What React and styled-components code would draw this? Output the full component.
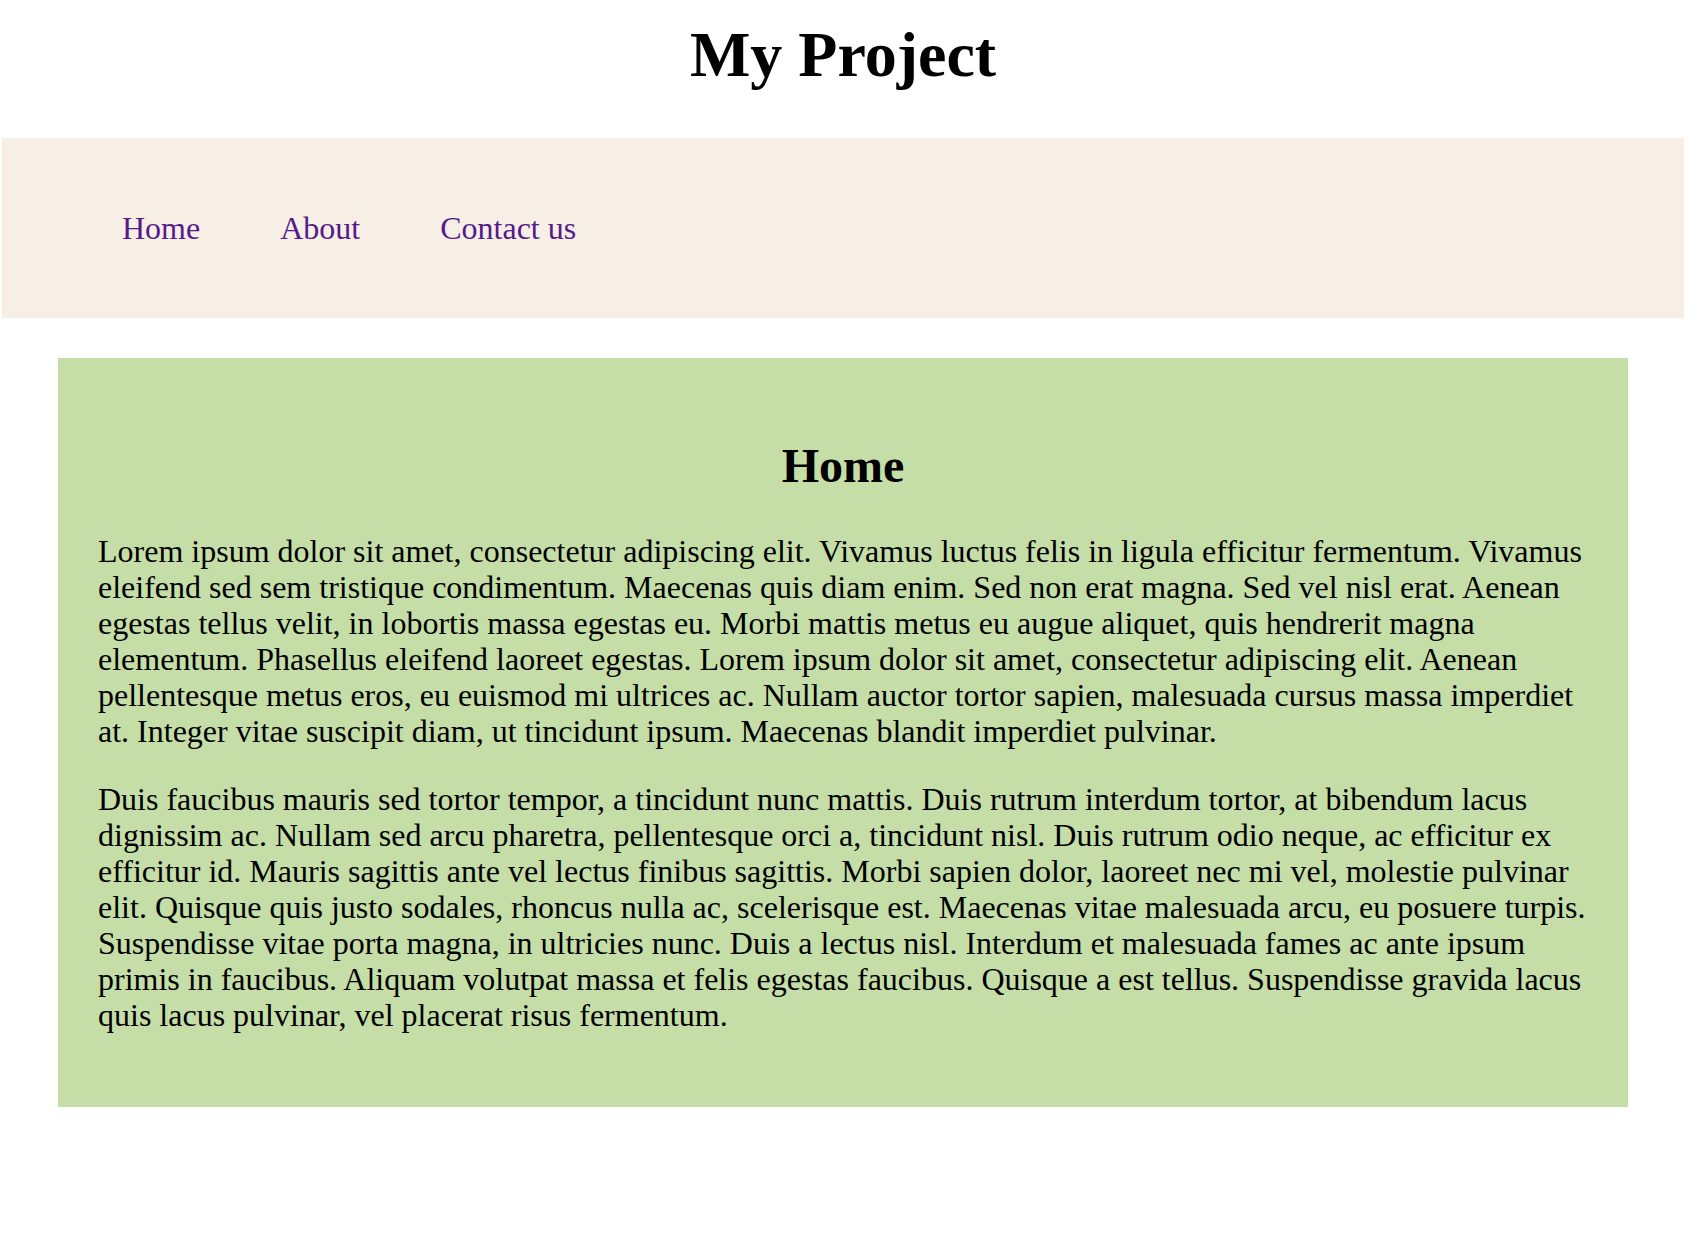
import React from "react";
import styled, { createGlobalStyle } from "styled-components";

const GlobalStyle = createGlobalStyle`
  html, body {
    margin: 0;
    padding: 0;
    background: #ffffff;
  }
  body {
    font-family: "Liberation Serif", "Times New Roman", serif;
    color: #000;
  }
`;

const Page = styled.div`
  width: 1686px;
  display: flex;
  flex-direction: column;
`;

const Header = styled.header`
  display: flex;
  justify-content: center;
`;

const Title = styled.h1`
  margin: 18px 0 46px;
  font-size: 64px;
  line-height: 74px;
  font-weight: 700;
  text-align: center;
`;

const Nav = styled.nav`
  margin: 0 2px;
  height: 180px;
  background: #f7efe6;
  display: flex;
  align-items: center;
  padding-left: 80px;
  box-sizing: border-box;
`;

const NavLink = styled.a`
  font-size: 32px;
  color: #551a8b;
  text-decoration: none;
  padding: 0 40px;
`;

const Main = styled.main`
  margin: 40px 58px 0;
  background: #c5dea8;
  padding: 40px 40px 42px;
`;

const SectionTitle = styled.h2`
  margin: 40px 0 39px;
  font-size: 48px;
  line-height: 56px;
  font-weight: 700;
  text-align: center;
`;

const Paragraph = styled.p`
  margin: 32px 0;
  font-size: 32px;
  line-height: 36px;
`;

export default function App() {
  return (
    <>
      <GlobalStyle />
      <Page>
        <Header>
          <Title>My Project</Title>
        </Header>
        <Nav>
          <NavLink href="#">Home</NavLink>
          <NavLink href="#">About</NavLink>
          <NavLink href="#">Contact us</NavLink>
        </Nav>
        <Main>
          <SectionTitle>Home</SectionTitle>
          <Paragraph>
            Lorem ipsum dolor sit amet, consectetur adipiscing elit. Vivamus luctus felis in ligula efficitur fermentum. Vivamus eleifend sed sem tristique condimentum. Maecenas quis diam enim. Sed non erat magna. Sed vel nisl erat. Aenean egestas tellus velit, in lobortis massa egestas eu. Morbi mattis metus eu augue aliquet, quis hendrerit magna elementum. Phasellus eleifend laoreet egestas. Lorem ipsum dolor sit amet, consectetur adipiscing elit. Aenean pellentesque metus eros, eu euismod mi ultrices ac. Nullam auctor tortor sapien, malesuada cursus massa imperdiet at. Integer vitae suscipit diam, ut tincidunt ipsum. Maecenas blandit imperdiet pulvinar.
          </Paragraph>
          <Paragraph>
            Duis faucibus mauris sed tortor tempor, a tincidunt nunc mattis. Duis rutrum interdum tortor, at bibendum lacus dignissim ac. Nullam sed arcu pharetra, pellentesque orci a, tincidunt nisl. Duis rutrum odio neque, ac efficitur ex efficitur id. Mauris sagittis ante vel lectus finibus sagittis. Morbi sapien dolor, laoreet nec mi vel, molestie pulvinar elit. Quisque quis justo sodales, rhoncus nulla ac, scelerisque est. Maecenas vitae malesuada arcu, eu posuere turpis. Suspendisse vitae porta magna, in ultricies nunc. Duis a lectus nisl. Interdum et malesuada fames ac ante ipsum primis in faucibus. Aliquam volutpat massa et felis egestas faucibus. Quisque a est tellus. Suspendisse gravida lacus quis lacus pulvinar, vel placerat risus fermentum.
          </Paragraph>
        </Main>
      </Page>
    </>
  );
}
